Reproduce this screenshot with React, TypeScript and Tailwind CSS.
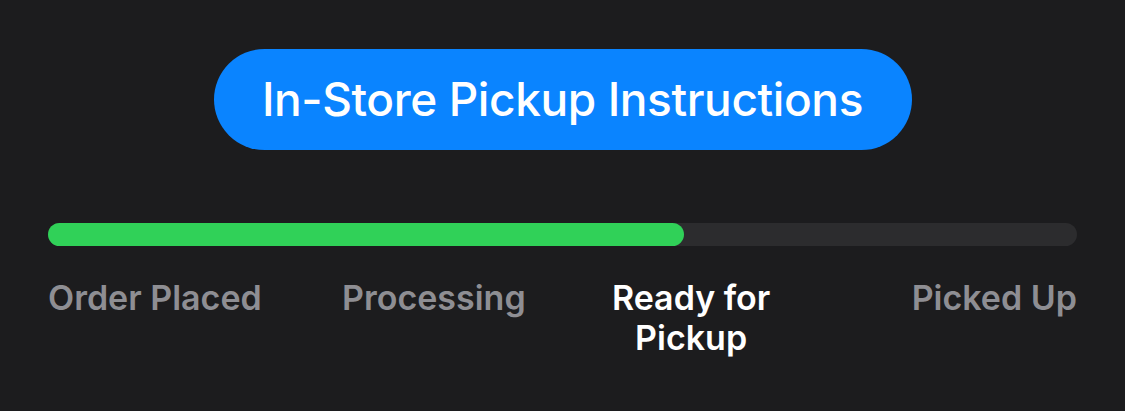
const steps = ['Order Placed', 'Processing', 'Ready for Pickup', 'Picked Up'];
const current = 2;

export default function App() {
  return (
    <div
      className="w-full h-[411px] bg-[#1c1c1e] px-12 pt-[49px] flex flex-col"
      style={{ fontFamily: 'Inter, "Noto Sans", sans-serif' }}
    >
      <div className="flex justify-center">
        <button className="h-[101px] w-[698px] rounded-full bg-[#0a84ff] text-white text-[46px] font-medium tracking-[-0.4px]">
          In-Store Pickup Instructions
        </button>
      </div>
      <div className="mt-[73px] h-[23px] w-full rounded-full bg-[#2c2c2e]">
        <div className="h-full w-[61.8%] rounded-full bg-[#30d158]" />
      </div>
      <div className="mt-[32px] flex">
        {steps.map((s, i) => (
          <div
            key={s}
            className={
              'flex-1 flex ' +
              (i === 0 ? 'justify-start' : i === steps.length - 1 ? 'justify-end' : 'justify-center')
            }
          >
            <span
              className={
                'text-[34px] leading-[40px] font-semibold max-w-[225px] ' +
                (i === 0 ? 'text-left ' : i === steps.length - 1 ? 'text-right ' : 'text-center ') +
                (i === current ? 'text-white' : 'text-[#8e8e93]')
              }
            >
              {s}
            </span>
          </div>
        ))}
      </div>
    </div>
  );
}
